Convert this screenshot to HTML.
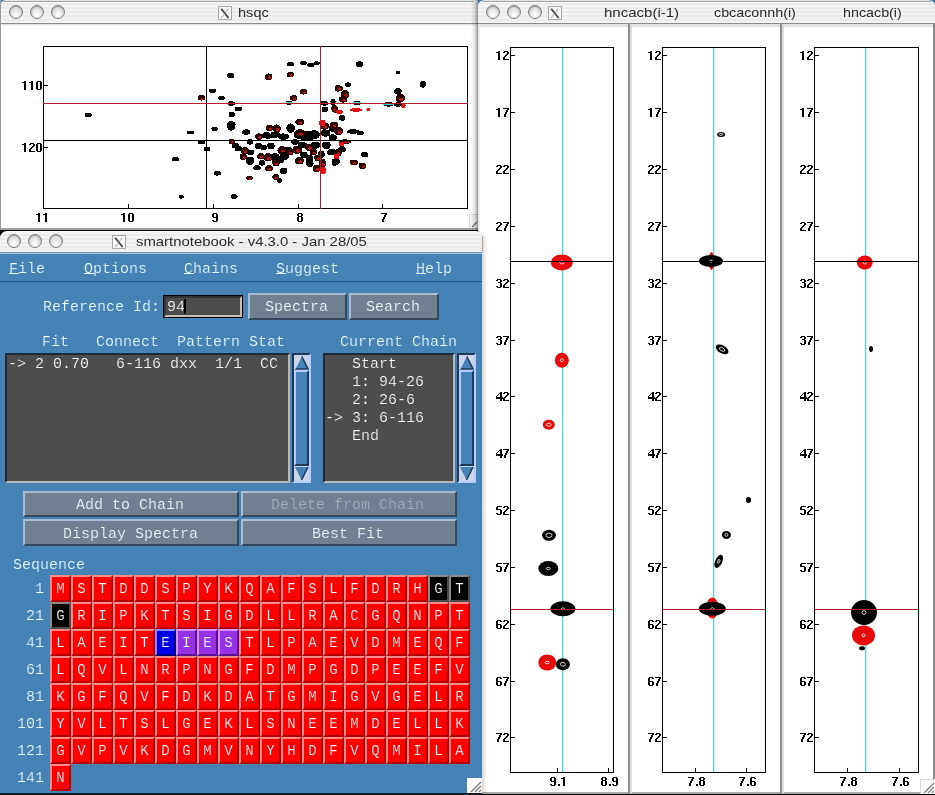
<!DOCTYPE html><html><head><meta charset="utf-8"><style>
html,body{margin:0;padding:0;}
body{width:935px;height:795px;overflow:hidden;position:relative;background:#3f73a8;}
div{position:absolute;box-sizing:border-box;}
.tb{height:24px;background:repeating-linear-gradient(#f3f3f3 0px,#f3f3f3 2px,#eaeaea 2px,#eaeaea 4px);}
.btn{width:14px;height:14px;border-radius:50%;border:1px solid #7c7c7c;
 background:radial-gradient(ellipse at 50% 80%,#ffffff 0%,#f0f0f0 30%,#d4d4d4 75%,#bdbdbd 100%);box-shadow:inset 0 1px 1px rgba(0,0,0,0.25);}
.xi{width:15px;height:14px;border:1px solid #bcbcbc;background:#f2f2f2;
 font-family:'Liberation Serif',serif;font-size:16px;line-height:13px;text-align:center;color:#6a6a6a;}
.tt{will-change:transform;font-family:'Liberation Sans',sans-serif;font-size:13px;line-height:15px;color:#2b2b2b;white-space:pre;transform-origin:0 0;}
.m{will-change:transform;font-family:'Liberation Mono',monospace;font-size:15px;line-height:15px;color:#eefeff;white-space:pre;-webkit-text-stroke:0.22px #4682b4;margin-left:-1px;}
.tkb{background:#708090;border-top:2px solid #a6bcd4;border-left:2px solid #a6bcd4;border-right:2px solid #34495e;border-bottom:2px solid #34495e;}
.cell{width:21px;height:27px;border-top:2px solid #ff8a8a;border-left:2px solid #ff8a8a;border-right:2px solid #b40000;border-bottom:2px solid #b40000;background:#ff0000;
 font-family:'Liberation Mono',monospace;font-size:14px;line-height:24px;text-align:center;color:#fff;-webkit-text-stroke:0.2px #ff0000;will-change:transform;}
</style></head><body>
<div style="left:0;top:20px;width:478px;height:211px;background:#fff;"></div>
<div class="tb" style="left:0px;top:0px;width:478px;border-radius:6px 0 0 0;border-top:1px solid #e4e4e4;"></div>
<div style="left:4px;top:1px;width:470px;height:1px;background:#a4a4a4"></div>
<div style="left:3px;top:2px;width:472px;height:1px;background:#fbfbfb"></div>
<div class="btn" style="left:9px;top:5px;"></div>
<div class="btn" style="left:30px;top:5px;"></div>
<div class="btn" style="left:51px;top:5px;"></div>
<svg style="position:absolute;left:218px;top:6px" width="14" height="14"><rect x="0.5" y="0.5" width="13" height="13" fill="#f6f6f6" stroke="#a8a8a8"/><path d="M3.2 2.8L10.6 12" stroke="#454545" stroke-width="1.8"/><path d="M10.2 2.8L3.2 12" stroke="#8a8a8a" stroke-width="0.8"/></svg>
<div style="left:0;top:23px;width:478px;height:1px;background:#8c8c8c;"></div>
<div style="left:0;top:24px;width:478px;height:1px;background:#e4e4e4;"></div>
<div style="left:0;top:25px;width:478px;height:1px;background:#f2f2f2;"></div>
<div style="left:0;top:0;width:1px;height:231px;background:#9a9a9a;"></div>
<div class="tt" style="left:238px;top:5px;transform:scaleX(1.12)">hsqc</div>
<div style="left:0;top:228px;width:478px;height:2px;background:#a0a0a0;"></div>
<div style="left:0;top:230px;width:478px;height:1px;background:#000;"></div>
<div style="left:469px;top:214px;width:9px;height:14px;background:#f4f4f4;border-left:1px solid #d8d8d8;border-top:1px solid #d8d8d8"></div>
<svg style="position:absolute;left:469px;top:214px" width="9" height="14"><path d="M3 13L8 8" stroke="#707070" stroke-width="1.1"/></svg>
<svg style="position:absolute;left:0;top:0" width="478" height="231" shape-rendering="crispEdges"><g fill="#000"><rect x="43" y="46" width="425" height="1"/><rect x="43" y="208" width="425" height="1"/><rect x="43" y="46" width="1" height="163"/><rect x="467" y="46" width="1" height="163"/><rect x="43" y="85" width="5" height="1"/><rect x="43" y="147" width="5" height="1"/><rect x="43" y="204" width="1" height="4"/><rect x="128" y="204" width="1" height="4"/><rect x="213" y="204" width="1" height="4"/><rect x="298" y="204" width="1" height="4"/><rect x="382" y="204" width="1" height="4"/><path d="M24 81h2v1h-2zM22 82h4v1h-4zM24 83h2v1h-2zM24 84h2v1h-2zM24 85h2v1h-2zM24 86h2v1h-2zM24 87h2v1h-2zM24 88h2v1h-2zM24 89h2v1h-2zM31 81h2v1h-2zM29 82h4v1h-4zM31 83h2v1h-2zM31 84h2v1h-2zM31 85h2v1h-2zM31 86h2v1h-2zM31 87h2v1h-2zM31 88h2v1h-2zM31 89h2v1h-2zM37 81h4v1h-4zM36 82h2v1h-2zM40 82h2v1h-2zM36 83h2v1h-2zM40 83h2v1h-2zM36 84h2v1h-2zM40 84h2v1h-2zM36 85h2v1h-2zM40 85h2v1h-2zM36 86h2v1h-2zM40 86h2v1h-2zM36 87h2v1h-2zM40 87h2v1h-2zM36 88h2v1h-2zM40 88h2v1h-2zM37 89h4v1h-4zM24 143h2v1h-2zM22 144h4v1h-4zM24 145h2v1h-2zM24 146h2v1h-2zM24 147h2v1h-2zM24 148h2v1h-2zM24 149h2v1h-2zM24 150h2v1h-2zM24 151h2v1h-2zM30 143h4v1h-4zM29 144h2v1h-2zM33 144h2v1h-2zM33 145h2v1h-2zM32 146h2v1h-2zM31 147h2v1h-2zM30 148h2v1h-2zM29 149h2v1h-2zM29 150h2v1h-2zM29 151h6v1h-6zM37 143h4v1h-4zM36 144h2v1h-2zM40 144h2v1h-2zM36 145h2v1h-2zM40 145h2v1h-2zM36 146h2v1h-2zM40 146h2v1h-2zM36 147h2v1h-2zM40 147h2v1h-2zM36 148h2v1h-2zM40 148h2v1h-2zM36 149h2v1h-2zM40 149h2v1h-2zM36 150h2v1h-2zM40 150h2v1h-2zM37 151h4v1h-4zM38 213h2v1h-2zM36 214h4v1h-4zM38 215h2v1h-2zM38 216h2v1h-2zM38 217h2v1h-2zM38 218h2v1h-2zM38 219h2v1h-2zM38 220h2v1h-2zM38 221h2v1h-2zM45 213h2v1h-2zM43 214h4v1h-4zM45 215h2v1h-2zM45 216h2v1h-2zM45 217h2v1h-2zM45 218h2v1h-2zM45 219h2v1h-2zM45 220h2v1h-2zM45 221h2v1h-2zM123 213h2v1h-2zM121 214h4v1h-4zM123 215h2v1h-2zM123 216h2v1h-2zM123 217h2v1h-2zM123 218h2v1h-2zM123 219h2v1h-2zM123 220h2v1h-2zM123 221h2v1h-2zM129 213h4v1h-4zM128 214h2v1h-2zM132 214h2v1h-2zM128 215h2v1h-2zM132 215h2v1h-2zM128 216h2v1h-2zM132 216h2v1h-2zM128 217h2v1h-2zM132 217h2v1h-2zM128 218h2v1h-2zM132 218h2v1h-2zM128 219h2v1h-2zM132 219h2v1h-2zM128 220h2v1h-2zM132 220h2v1h-2zM129 221h4v1h-4zM213 213h4v1h-4zM212 214h2v1h-2zM216 214h2v1h-2zM212 215h2v1h-2zM216 215h2v1h-2zM212 216h2v1h-2zM216 216h2v1h-2zM213 217h5v1h-5zM216 218h2v1h-2zM216 219h2v1h-2zM212 220h2v1h-2zM216 220h2v1h-2zM213 221h4v1h-4zM298 213h4v1h-4zM297 214h2v1h-2zM301 214h2v1h-2zM297 215h2v1h-2zM301 215h2v1h-2zM298 216h4v1h-4zM297 217h2v1h-2zM301 217h2v1h-2zM297 218h2v1h-2zM301 218h2v1h-2zM297 219h2v1h-2zM301 219h2v1h-2zM297 220h2v1h-2zM301 220h2v1h-2zM298 221h4v1h-4zM381 213h6v1h-6zM385 214h2v1h-2zM384 215h2v1h-2zM384 216h2v1h-2zM383 217h2v1h-2zM383 218h2v1h-2zM382 219h2v1h-2zM382 220h2v1h-2zM382 221h2v1h-2z"/></g><g><ellipse cx="88.3" cy="114.9" rx="3.8" ry="2.3" fill="#000"/><ellipse cx="190.4" cy="132.6" rx="3.8" ry="1.9000000000000001" fill="#000"/><ellipse cx="175.5" cy="159.1" rx="3.8" ry="2.3" fill="#000"/><ellipse cx="181.3" cy="196.8" rx="2.8" ry="1.9000000000000001" fill="#000"/><ellipse cx="230.6" cy="75.7" rx="3.8" ry="2.8" fill="#000"/><ellipse cx="212.5" cy="90.8" rx="3.8" ry="2.3" fill="#000"/><ellipse cx="201.4" cy="97.8" rx="3.8" ry="2.8" fill="#2c0505"/><ellipse cx="202.16" cy="98.64" rx="1.5959999999999999" ry="1.1199999999999999" fill="#b81414"/><ellipse cx="221.4" cy="98.1" rx="3.8" ry="1.9000000000000001" fill="#000"/><ellipse cx="231.1" cy="103.5" rx="3.8" ry="2.3" fill="#000"/><rect x="227.29999999999998" y="103" width="7.6" height="1" fill="#2ad4d4"/><ellipse cx="238.4" cy="108.9" rx="3.8" ry="2.3" fill="#000"/><ellipse cx="231.8" cy="114.7" rx="3.3" ry="2.8" fill="#000"/><ellipse cx="231.3" cy="124.5" rx="4.3" ry="3.1999999999999997" fill="#000"/><ellipse cx="290.5" cy="64.1" rx="3.8" ry="2.3" fill="#000"/><ellipse cx="303.5" cy="62.9" rx="3.3" ry="2.3" fill="#000"/><ellipse cx="310.8" cy="65.1" rx="3.8" ry="2.3" fill="#000"/><ellipse cx="316.8" cy="63.3" rx="3.3" ry="1.9000000000000001" fill="#000"/><ellipse cx="290.4" cy="74.7" rx="3.8" ry="2.8" fill="#2c0505"/><ellipse cx="291.15999999999997" cy="75.54" rx="1.5959999999999999" ry="1.1199999999999999" fill="#b81414"/><ellipse cx="268.6" cy="76.7" rx="3.8" ry="3.3" fill="#2c0505"/><ellipse cx="269.36" cy="77.69" rx="1.5959999999999999" ry="1.32" fill="#b81414"/><ellipse cx="303.5" cy="91.8" rx="3.8" ry="2.8" fill="#2c0505"/><ellipse cx="304.26" cy="92.64" rx="1.5959999999999999" ry="1.1199999999999999" fill="#b81414"/><ellipse cx="293.7" cy="98" rx="3.8" ry="2.8" fill="#2c0505"/><ellipse cx="294.46" cy="98.84" rx="1.5959999999999999" ry="1.1199999999999999" fill="#b81414"/><ellipse cx="289" cy="102.8" rx="3.3" ry="2.3" fill="#000"/><rect x="285.7" y="102" width="6.6" height="1" fill="#2ad4d4"/><ellipse cx="324.4" cy="103.3" rx="4.3" ry="2.3" fill="#000"/><rect x="320.09999999999997" y="103" width="8.6" height="1" fill="#2ad4d4"/><ellipse cx="333" cy="102.8" rx="3.3" ry="2.3" fill="#000"/><rect x="329.7" y="102" width="6.6" height="1" fill="#2ad4d4"/><ellipse cx="324.9" cy="109.4" rx="3.3" ry="2.8" fill="#000"/><ellipse cx="335" cy="109.4" rx="3.3" ry="3.3" fill="#2c0505"/><ellipse cx="335.66" cy="110.39" rx="1.386" ry="1.32" fill="#b81414"/><ellipse cx="338" cy="88.3" rx="3.3" ry="3.3" fill="#2c0505"/><ellipse cx="338.66" cy="89.28999999999999" rx="1.386" ry="1.32" fill="#b81414"/><ellipse cx="299.7" cy="122" rx="4.3" ry="3.1999999999999997" fill="#2c0505"/><ellipse cx="300.56" cy="122.96" rx="1.8059999999999998" ry="1.28" fill="#b81414"/><ellipse cx="359.4" cy="64.1" rx="3.8" ry="2.8" fill="#000"/><ellipse cx="397.9" cy="72.4" rx="2.3" ry="1.9000000000000001" fill="#000"/><ellipse cx="348.1" cy="84.7" rx="3.3" ry="2.3" fill="#000"/><ellipse cx="339" cy="88.3" rx="3.8" ry="2.8" fill="#2c0505"/><ellipse cx="339.76" cy="89.14" rx="1.5959999999999999" ry="1.1199999999999999" fill="#b81414"/><ellipse cx="345.1" cy="94.3" rx="4.3" ry="4.3" fill="#2c0505"/><ellipse cx="345.96000000000004" cy="95.59" rx="1.8059999999999998" ry="1.72" fill="#b81414"/><ellipse cx="343.1" cy="99.3" rx="4.3" ry="3.3" fill="#2c0505"/><ellipse cx="343.96000000000004" cy="100.28999999999999" rx="1.8059999999999998" ry="1.32" fill="#b81414"/><ellipse cx="333" cy="101.3" rx="2.3" ry="2.3" fill="#000"/><ellipse cx="357.2" cy="102.8" rx="3.8" ry="2.3" fill="#000"/><rect x="353.4" y="102" width="7.6" height="1" fill="#2ad4d4"/><ellipse cx="356.2" cy="109.9" rx="6.3" ry="1.9000000000000001" fill="#e81010"/><ellipse cx="368.2" cy="109.6" rx="1.8" ry="1.5" fill="#e81010"/><ellipse cx="334" cy="108.4" rx="2.8" ry="3.3" fill="#2c0505"/><ellipse cx="334.56" cy="109.39" rx="1.176" ry="1.32" fill="#b81414"/><ellipse cx="339.6" cy="111.9" rx="3.3" ry="2.3" fill="#e81010"/><ellipse cx="342.1" cy="117.9" rx="3.3" ry="2.8" fill="#000"/><ellipse cx="334" cy="124.5" rx="3.8" ry="2.6999999999999997" fill="#2c0505"/><ellipse cx="334.76" cy="125.31" rx="1.5959999999999999" ry="1.0799999999999998" fill="#b81414"/><ellipse cx="397.9" cy="91.3" rx="3.8" ry="3.3" fill="#000"/><ellipse cx="400.4" cy="98.3" rx="4.8" ry="4.3" fill="#2c0505"/><ellipse cx="401.35999999999996" cy="99.59" rx="2.016" ry="1.72" fill="#b81414"/><ellipse cx="388.4" cy="104.3" rx="5.3" ry="2.3" fill="#000"/><rect x="383.09999999999997" y="104" width="10.6" height="1" fill="#2ad4d4"/><ellipse cx="398" cy="104.5" rx="4.3" ry="2.3" fill="#000"/><ellipse cx="403.4" cy="105.9" rx="2.3" ry="2.3" fill="#e81010"/><ellipse cx="422.8" cy="84.4" rx="3.3" ry="3.3" fill="#000"/><ellipse cx="214.7" cy="128.9" rx="3.3" ry="2.3" fill="#000"/><ellipse cx="231.1" cy="126" rx="4.3" ry="4.7" fill="#000"/><ellipse cx="246.2" cy="132.1" rx="4.3" ry="2.6999999999999997" fill="#000"/><ellipse cx="201.6" cy="142.3" rx="3.8" ry="1.9000000000000001" fill="#000"/><ellipse cx="207" cy="149.2" rx="3.3" ry="2.3" fill="#000"/><ellipse cx="231.8" cy="141.6" rx="3.3" ry="2.6999999999999997" fill="#2c0505"/><ellipse cx="232.46" cy="142.41" rx="1.386" ry="1.0799999999999998" fill="#b81414"/><ellipse cx="235.3" cy="145.7" rx="3.8" ry="2.6999999999999997" fill="#000"/><ellipse cx="238.4" cy="148.7" rx="3.8" ry="2.6999999999999997" fill="#000"/><ellipse cx="244.9" cy="150.7" rx="3.8" ry="3.6999999999999997" fill="#2c0505"/><ellipse cx="245.66" cy="151.81" rx="1.5959999999999999" ry="1.48" fill="#b81414"/><ellipse cx="250.4" cy="152.2" rx="3.8" ry="2.6999999999999997" fill="#000"/><ellipse cx="243.4" cy="156.7" rx="3.8" ry="3.1999999999999997" fill="#2c0505"/><ellipse cx="244.16" cy="157.66" rx="1.5959999999999999" ry="1.28" fill="#b81414"/><ellipse cx="250.2" cy="160.7" rx="4.3" ry="4.2" fill="#000"/><ellipse cx="257" cy="167.8" rx="3.8" ry="2.6999999999999997" fill="#000"/><ellipse cx="217.4" cy="173.3" rx="3.8" ry="2.3" fill="#000"/><ellipse cx="249.4" cy="178.2" rx="3.3" ry="2.3" fill="#2c0505"/><ellipse cx="250.06" cy="178.89" rx="1.386" ry="0.9199999999999999" fill="#b81414"/><ellipse cx="234.3" cy="196.5" rx="3.3" ry="2.3" fill="#000"/><ellipse cx="258.5" cy="137.1" rx="3.3" ry="2.6999999999999997" fill="#2c0505"/><ellipse cx="259.16" cy="137.91" rx="1.386" ry="1.0799999999999998" fill="#b81414"/><ellipse cx="258" cy="145.7" rx="3.3" ry="2.6999999999999997" fill="#2c0505"/><ellipse cx="258.66" cy="146.51" rx="1.386" ry="1.0799999999999998" fill="#b81414"/><ellipse cx="269.6" cy="128.1" rx="3.8" ry="3.1999999999999997" fill="#2c0505"/><ellipse cx="270.36" cy="129.06" rx="1.5959999999999999" ry="1.28" fill="#b81414"/><ellipse cx="276.6" cy="128.6" rx="4.3" ry="4.2" fill="#2c0505"/><ellipse cx="277.46000000000004" cy="129.85999999999999" rx="1.8059999999999998" ry="1.6800000000000002" fill="#b81414"/><ellipse cx="290.7" cy="128.1" rx="4.3" ry="4.7" fill="#000"/><ellipse cx="259" cy="136.6" rx="3.8" ry="3.1999999999999997" fill="#2c0505"/><ellipse cx="259.76" cy="137.56" rx="1.5959999999999999" ry="1.28" fill="#b81414"/><ellipse cx="268.1" cy="136.1" rx="4.3" ry="2.6999999999999997" fill="#000"/><ellipse cx="275.1" cy="134.6" rx="4.8" ry="2.6999999999999997" fill="#000"/><ellipse cx="283.2" cy="136.6" rx="5.8" ry="3.1999999999999997" fill="#000"/><ellipse cx="307" cy="135.5" rx="12.8" ry="4.7" fill="#000"/><ellipse cx="325.4" cy="133.1" rx="4.8" ry="3.6999999999999997" fill="#000"/><ellipse cx="324.4" cy="126.1" rx="4.8" ry="3.6999999999999997" fill="#2c0505"/><ellipse cx="325.35999999999996" cy="127.21" rx="2.016" ry="1.48" fill="#b81414"/><ellipse cx="322.4" cy="123" rx="3.3" ry="3.1999999999999997" fill="#e81010"/><ellipse cx="332.5" cy="128.1" rx="3.8" ry="3.6999999999999997" fill="#000"/><ellipse cx="333" cy="137.6" rx="3.8" ry="3.1999999999999997" fill="#000"/><ellipse cx="259" cy="146.2" rx="3.8" ry="3.1999999999999997" fill="#000"/><ellipse cx="263.6" cy="147.7" rx="3.3" ry="2.6999999999999997" fill="#000"/><ellipse cx="261" cy="156.2" rx="3.8" ry="3.1999999999999997" fill="#2c0505"/><ellipse cx="261.76" cy="157.16" rx="1.5959999999999999" ry="1.28" fill="#b81414"/><ellipse cx="268.1" cy="157.3" rx="4.8" ry="4.2" fill="#2c0505"/><ellipse cx="269.06" cy="158.56" rx="2.016" ry="1.6800000000000002" fill="#b81414"/><ellipse cx="275.1" cy="157.3" rx="4.8" ry="4.2" fill="#000"/><ellipse cx="282.2" cy="150.2" rx="4.8" ry="4.2" fill="#2c0505"/><ellipse cx="283.15999999999997" cy="151.45999999999998" rx="2.016" ry="1.6800000000000002" fill="#b81414"/><ellipse cx="284.2" cy="156.2" rx="4.8" ry="4.2" fill="#000"/><ellipse cx="280.2" cy="160.8" rx="3.8" ry="2.6999999999999997" fill="#000"/><ellipse cx="288.2" cy="149.7" rx="3.8" ry="2.6999999999999997" fill="#000"/><ellipse cx="297.3" cy="149.7" rx="4.8" ry="4.2" fill="#2c0505"/><ellipse cx="298.26" cy="150.95999999999998" rx="2.016" ry="1.6800000000000002" fill="#b81414"/><ellipse cx="302.3" cy="145.2" rx="4.8" ry="3.1999999999999997" fill="#000"/><ellipse cx="309.3" cy="147.2" rx="4.8" ry="3.6999999999999997" fill="#2c0505"/><ellipse cx="310.26" cy="148.31" rx="2.016" ry="1.48" fill="#b81414"/><ellipse cx="315.4" cy="145.2" rx="4.8" ry="3.6999999999999997" fill="#000"/><ellipse cx="313.4" cy="152.2" rx="3.8" ry="3.1999999999999997" fill="#2c0505"/><ellipse cx="314.15999999999997" cy="153.16" rx="1.5959999999999999" ry="1.28" fill="#b81414"/><ellipse cx="299.3" cy="160.8" rx="4.8" ry="3.6999999999999997" fill="#2c0505"/><ellipse cx="300.26" cy="161.91000000000003" rx="2.016" ry="1.48" fill="#b81414"/><ellipse cx="309.3" cy="158.3" rx="3.8" ry="3.6999999999999997" fill="#000"/><ellipse cx="309.8" cy="163.3" rx="3.8" ry="3.6999999999999997" fill="#000"/><ellipse cx="316.9" cy="168.3" rx="4.3" ry="3.6999999999999997" fill="#2c0505"/><ellipse cx="317.76" cy="169.41000000000003" rx="1.8059999999999998" ry="1.48" fill="#b81414"/><ellipse cx="321.4" cy="154.2" rx="3.3" ry="3.6999999999999997" fill="#000"/><ellipse cx="322.4" cy="163.3" rx="3.8" ry="4.7" fill="#2c0505"/><ellipse cx="323.15999999999997" cy="164.71" rx="1.5959999999999999" ry="1.8800000000000001" fill="#b81414"/><ellipse cx="322.9" cy="170.3" rx="3.3" ry="3.6999999999999997" fill="#e81010"/><ellipse cx="326.4" cy="145.2" rx="4.3" ry="3.6999999999999997" fill="#000"/><ellipse cx="331.5" cy="152.2" rx="4.3" ry="3.1999999999999997" fill="#000"/><ellipse cx="269.1" cy="168.3" rx="3.8" ry="3.1999999999999997" fill="#2c0505"/><ellipse cx="269.86" cy="169.26000000000002" rx="1.5959999999999999" ry="1.28" fill="#b81414"/><ellipse cx="283.7" cy="170.8" rx="3.8" ry="3.1999999999999997" fill="#000"/><ellipse cx="275.6" cy="176.9" rx="3.3" ry="2.8" fill="#2c0505"/><ellipse cx="276.26000000000005" cy="177.74" rx="1.386" ry="1.1199999999999999" fill="#b81414"/><ellipse cx="279.6" cy="180.4" rx="2.8" ry="2.3" fill="#000"/><ellipse cx="334.5" cy="162.3" rx="2.8" ry="3.6999999999999997" fill="#000"/><ellipse cx="334.5" cy="125.6" rx="3.8" ry="3.1999999999999997" fill="#2c0505"/><ellipse cx="335.26" cy="126.55999999999999" rx="1.5959999999999999" ry="1.28" fill="#b81414"/><ellipse cx="338.6" cy="131.1" rx="4.8" ry="4.2" fill="#2c0505"/><ellipse cx="339.56" cy="132.35999999999999" rx="2.016" ry="1.6800000000000002" fill="#b81414"/><ellipse cx="353.1" cy="131.6" rx="6.3" ry="2.3" fill="#000"/><ellipse cx="360.2" cy="133.1" rx="3.8" ry="1.9000000000000001" fill="#000"/><ellipse cx="332" cy="137.6" rx="3.3" ry="3.1999999999999997" fill="#000"/><ellipse cx="345.1" cy="141.7" rx="6.3" ry="2.3" fill="#2c0505"/><ellipse cx="346.36" cy="142.39" rx="2.646" ry="0.9199999999999999" fill="#b81414"/><ellipse cx="341.6" cy="144.2" rx="2.8" ry="2.6999999999999997" fill="#e81010"/><ellipse cx="342.1" cy="149.2" rx="3.8" ry="3.1999999999999997" fill="#000"/><ellipse cx="332" cy="151.7" rx="3.8" ry="3.1999999999999997" fill="#000"/><ellipse cx="338" cy="152.7" rx="3.8" ry="3.6999999999999997" fill="#2c0505"/><ellipse cx="338.76" cy="153.81" rx="1.5959999999999999" ry="1.48" fill="#b81414"/><ellipse cx="336.5" cy="157.3" rx="2.8" ry="3.6999999999999997" fill="#e81010"/><ellipse cx="336" cy="161.8" rx="3.8" ry="3.1999999999999997" fill="#000"/><ellipse cx="364.7" cy="154.7" rx="3.8" ry="2.8" fill="#000"/><ellipse cx="353.9" cy="162.3" rx="4.3" ry="2.8" fill="#2c0505"/><ellipse cx="354.76" cy="163.14000000000001" rx="1.8059999999999998" ry="1.1199999999999999" fill="#b81414"/><ellipse cx="362.4" cy="165.8" rx="3.8" ry="3.3" fill="#2c0505"/><ellipse cx="363.15999999999997" cy="166.79000000000002" rx="1.5959999999999999" ry="1.32" fill="#b81414"/><ellipse cx="266.4" cy="135.4" rx="4.3" ry="3.1999999999999997" fill="#000"/><ellipse cx="274.6" cy="134.7" rx="4.3" ry="3.1999999999999997" fill="#000"/><ellipse cx="282.9" cy="137" rx="4.3" ry="2.6999999999999997" fill="#000"/><ellipse cx="300" cy="133" rx="5.8" ry="3.6999999999999997" fill="#2c0505"/><ellipse cx="301.16" cy="134.11" rx="2.436" ry="1.48" fill="#b81414"/><ellipse cx="314" cy="134" rx="5.8" ry="3.6999999999999997" fill="#000"/><ellipse cx="324.8" cy="132.5" rx="3.8" ry="3.1999999999999997" fill="#000"/><ellipse cx="333.8" cy="125" rx="3.8" ry="3.1999999999999997" fill="#2c0505"/><ellipse cx="334.56" cy="125.96" rx="1.5959999999999999" ry="1.28" fill="#b81414"/><ellipse cx="290" cy="152" rx="3.8" ry="3.1999999999999997" fill="#2c0505"/><ellipse cx="290.76" cy="152.96" rx="1.5959999999999999" ry="1.28" fill="#b81414"/><ellipse cx="304" cy="155" rx="3.8" ry="3.1999999999999997" fill="#000"/><ellipse cx="318" cy="158" rx="3.8" ry="3.1999999999999997" fill="#2c0505"/><ellipse cx="318.76" cy="158.96" rx="1.5959999999999999" ry="1.28" fill="#b81414"/><ellipse cx="271" cy="146" rx="3.8" ry="3.1999999999999997" fill="#000"/><ellipse cx="295" cy="142" rx="3.8" ry="2.6999999999999997" fill="#000"/><ellipse cx="250" cy="142" rx="3.3" ry="2.6999999999999997" fill="#000"/><ellipse cx="276" cy="163" rx="3.8" ry="3.1999999999999997" fill="#2c0505"/><ellipse cx="276.76" cy="163.96" rx="1.5959999999999999" ry="1.28" fill="#b81414"/><ellipse cx="262" cy="163" rx="3.3" ry="2.6999999999999997" fill="#000"/></g><rect x="206" y="46" width="1" height="163" fill="#000"/><rect x="43" y="140" width="425" height="1" fill="#000"/><rect x="320" y="46" width="1" height="163" fill="#b0202a"/><rect x="43" y="103" width="425" height="1" fill="#b0202a"/></svg>
<div style="left:471px;top:0;width:7px;height:231px;background:linear-gradient(90deg,rgba(0,0,0,0),rgba(0,0,0,0.1) 50%,rgba(0,0,0,0.38));"></div>
<div style="left:478px;top:20px;width:457px;height:775px;background:#fff;"></div>
<div class="tb" style="left:478px;top:0px;width:457px;border-radius:6px 6px 0 0;border-top:1px solid #e4e4e4;"></div>
<div style="left:482px;top:1px;width:449px;height:1px;background:#a4a4a4"></div>
<div style="left:481px;top:2px;width:451px;height:1px;background:#fbfbfb"></div>
<div class="btn" style="left:486px;top:5px;"></div>
<div class="btn" style="left:507px;top:5px;"></div>
<div class="btn" style="left:528px;top:5px;"></div>
<svg style="position:absolute;left:548px;top:6px" width="14" height="14"><rect x="0.5" y="0.5" width="13" height="13" fill="#f6f6f6" stroke="#a8a8a8"/><path d="M3.2 2.8L10.6 12" stroke="#454545" stroke-width="1.8"/><path d="M10.2 2.8L3.2 12" stroke="#8a8a8a" stroke-width="0.8"/></svg>
<div style="left:478px;top:23px;width:457px;height:1px;background:#8c8c8c;"></div>
<div style="left:478px;top:24px;width:457px;height:3px;background:#e2e2e2;"></div>
<div class="tt" style="left:604px;top:5px;transform:scaleX(1.155)">hncacb(i-1)</div>
<div class="tt" style="left:714px;top:5px;transform:scaleX(1.1)">cbcaconnh(i)</div>
<div class="tt" style="left:843px;top:5px;transform:scaleX(1.1)">hncacb(i)</div>
<div style="left:478px;top:24px;width:1px;height:771px;background:#e2e2e2;"></div>
<div style="left:479px;top:24px;width:1px;height:771px;background:#f2f2f2;"></div>
<div style="left:933px;top:24px;width:2px;height:771px;background:#8a8a8a;"></div>
<div style="left:478px;top:792px;width:457px;height:2px;background:#a8a8a8;"></div>
<div style="left:478px;top:794px;width:457px;height:1px;background:#000;"></div>
<div style="left:628px;top:24px;width:2px;height:769px;background:#8c8c8c;"></div>
<div style="left:630px;top:24px;width:2px;height:769px;background:#dedede;"></div>
<div style="left:780px;top:24px;width:2px;height:769px;background:#8c8c8c;"></div>
<div style="left:782px;top:24px;width:2px;height:769px;background:#dedede;"></div>
<div style="left:920px;top:779px;width:15px;height:15px;background:#fbfbfb;border-top:1px solid #d8d8d8;border-left:1px solid #d8d8d8;"></div>
<svg style="position:absolute;left:920px;top:779px" width="15" height="15"><path d="M4 14L14 4M8 14L14 8M12 14L14 12" stroke="#808080" stroke-width="1.2"/></svg>
<svg style="position:absolute;left:0;top:0" width="935" height="795" shape-rendering="crispEdges"><g fill="#000"><rect x="510" y="47" width="104" height="1"/><rect x="510" y="772" width="104" height="1"/><rect x="510" y="47" width="1" height="726"/><rect x="613" y="47" width="1" height="726"/><rect x="510" y="55" width="5" height="1"/><rect x="510" y="112" width="5" height="1"/><rect x="510" y="169" width="5" height="1"/><rect x="510" y="226" width="5" height="1"/><rect x="510" y="283" width="5" height="1"/><rect x="510" y="340" width="5" height="1"/><rect x="510" y="396" width="5" height="1"/><rect x="510" y="453" width="5" height="1"/><rect x="510" y="510" width="5" height="1"/><rect x="510" y="567" width="5" height="1"/><rect x="510" y="624" width="5" height="1"/><rect x="510" y="681" width="5" height="1"/><rect x="510" y="737" width="5" height="1"/><rect x="557" y="768" width="1" height="4"/><rect x="608" y="768" width="1" height="4"/><rect x="562" y="48" width="1" height="724" fill="#5ccfd4"/><rect x="563" y="48" width="1" height="724" fill="#b4fbfb"/><rect x="662" y="47" width="104" height="1"/><rect x="662" y="772" width="104" height="1"/><rect x="662" y="47" width="1" height="726"/><rect x="765" y="47" width="1" height="726"/><rect x="662" y="55" width="5" height="1"/><rect x="662" y="112" width="5" height="1"/><rect x="662" y="169" width="5" height="1"/><rect x="662" y="226" width="5" height="1"/><rect x="662" y="283" width="5" height="1"/><rect x="662" y="340" width="5" height="1"/><rect x="662" y="396" width="5" height="1"/><rect x="662" y="453" width="5" height="1"/><rect x="662" y="510" width="5" height="1"/><rect x="662" y="567" width="5" height="1"/><rect x="662" y="624" width="5" height="1"/><rect x="662" y="681" width="5" height="1"/><rect x="662" y="737" width="5" height="1"/><rect x="695" y="768" width="1" height="4"/><rect x="746" y="768" width="1" height="4"/><rect x="713" y="48" width="1" height="724" fill="#5ccfd4"/><rect x="714" y="48" width="1" height="724" fill="#b4fbfb"/><rect x="814" y="47" width="105" height="1"/><rect x="814" y="772" width="105" height="1"/><rect x="814" y="47" width="1" height="726"/><rect x="918" y="47" width="1" height="726"/><rect x="814" y="55" width="5" height="1"/><rect x="814" y="112" width="5" height="1"/><rect x="814" y="169" width="5" height="1"/><rect x="814" y="226" width="5" height="1"/><rect x="814" y="283" width="5" height="1"/><rect x="814" y="340" width="5" height="1"/><rect x="814" y="396" width="5" height="1"/><rect x="814" y="453" width="5" height="1"/><rect x="814" y="510" width="5" height="1"/><rect x="814" y="567" width="5" height="1"/><rect x="814" y="624" width="5" height="1"/><rect x="814" y="681" width="5" height="1"/><rect x="814" y="737" width="5" height="1"/><rect x="847" y="768" width="1" height="4"/><rect x="899" y="768" width="1" height="4"/><rect x="865" y="48" width="1" height="724" fill="#5ccfd4"/><rect x="866" y="48" width="1" height="724" fill="#b4fbfb"/><path d="M498 51h2v1h-2zM496 52h4v1h-4zM498 53h2v1h-2zM498 54h2v1h-2zM498 55h2v1h-2zM498 56h2v1h-2zM498 57h2v1h-2zM498 58h2v1h-2zM498 59h2v1h-2zM504 51h4v1h-4zM503 52h2v1h-2zM507 52h2v1h-2zM507 53h2v1h-2zM506 54h2v1h-2zM505 55h2v1h-2zM504 56h2v1h-2zM503 57h2v1h-2zM503 58h2v1h-2zM503 59h6v1h-6zM498 108h2v1h-2zM496 109h4v1h-4zM498 110h2v1h-2zM498 111h2v1h-2zM498 112h2v1h-2zM498 113h2v1h-2zM498 114h2v1h-2zM498 115h2v1h-2zM498 116h2v1h-2zM503 108h6v1h-6zM507 109h2v1h-2zM506 110h2v1h-2zM506 111h2v1h-2zM505 112h2v1h-2zM505 113h2v1h-2zM504 114h2v1h-2zM504 115h2v1h-2zM504 116h2v1h-2zM497 165h4v1h-4zM496 166h2v1h-2zM500 166h2v1h-2zM500 167h2v1h-2zM499 168h2v1h-2zM498 169h2v1h-2zM497 170h2v1h-2zM496 171h2v1h-2zM496 172h2v1h-2zM496 173h6v1h-6zM504 165h4v1h-4zM503 166h2v1h-2zM507 166h2v1h-2zM507 167h2v1h-2zM506 168h2v1h-2zM505 169h2v1h-2zM504 170h2v1h-2zM503 171h2v1h-2zM503 172h2v1h-2zM503 173h6v1h-6zM497 222h4v1h-4zM496 223h2v1h-2zM500 223h2v1h-2zM500 224h2v1h-2zM499 225h2v1h-2zM498 226h2v1h-2zM497 227h2v1h-2zM496 228h2v1h-2zM496 229h2v1h-2zM496 230h6v1h-6zM503 222h6v1h-6zM507 223h2v1h-2zM506 224h2v1h-2zM506 225h2v1h-2zM505 226h2v1h-2zM505 227h2v1h-2zM504 228h2v1h-2zM504 229h2v1h-2zM504 230h2v1h-2zM497 279h4v1h-4zM496 280h2v1h-2zM500 280h2v1h-2zM500 281h2v1h-2zM498 282h3v1h-3zM500 283h2v1h-2zM500 284h2v1h-2zM500 285h2v1h-2zM496 286h2v1h-2zM500 286h2v1h-2zM497 287h4v1h-4zM504 279h4v1h-4zM503 280h2v1h-2zM507 280h2v1h-2zM507 281h2v1h-2zM506 282h2v1h-2zM505 283h2v1h-2zM504 284h2v1h-2zM503 285h2v1h-2zM503 286h2v1h-2zM503 287h6v1h-6zM497 336h4v1h-4zM496 337h2v1h-2zM500 337h2v1h-2zM500 338h2v1h-2zM498 339h3v1h-3zM500 340h2v1h-2zM500 341h2v1h-2zM500 342h2v1h-2zM496 343h2v1h-2zM500 343h2v1h-2zM497 344h4v1h-4zM503 336h6v1h-6zM507 337h2v1h-2zM506 338h2v1h-2zM506 339h2v1h-2zM505 340h2v1h-2zM505 341h2v1h-2zM504 342h2v1h-2zM504 343h2v1h-2zM504 344h2v1h-2zM500 392h2v1h-2zM499 393h3v1h-3zM498 394h1v1h-1zM500 394h2v1h-2zM497 395h1v1h-1zM500 395h2v1h-2zM496 396h1v1h-1zM500 396h2v1h-2zM496 397h7v1h-7zM496 398h7v1h-7zM500 399h2v1h-2zM500 400h2v1h-2zM504 392h4v1h-4zM503 393h2v1h-2zM507 393h2v1h-2zM507 394h2v1h-2zM506 395h2v1h-2zM505 396h2v1h-2zM504 397h2v1h-2zM503 398h2v1h-2zM503 399h2v1h-2zM503 400h6v1h-6zM500 449h2v1h-2zM499 450h3v1h-3zM498 451h1v1h-1zM500 451h2v1h-2zM497 452h1v1h-1zM500 452h2v1h-2zM496 453h1v1h-1zM500 453h2v1h-2zM496 454h7v1h-7zM496 455h7v1h-7zM500 456h2v1h-2zM500 457h2v1h-2zM503 449h6v1h-6zM507 450h2v1h-2zM506 451h2v1h-2zM506 452h2v1h-2zM505 453h2v1h-2zM505 454h2v1h-2zM504 455h2v1h-2zM504 456h2v1h-2zM504 457h2v1h-2zM497 506h5v1h-5zM496 507h2v1h-2zM496 508h2v1h-2zM496 509h5v1h-5zM500 510h2v1h-2zM500 511h2v1h-2zM500 512h2v1h-2zM496 513h2v1h-2zM500 513h2v1h-2zM497 514h4v1h-4zM504 506h4v1h-4zM503 507h2v1h-2zM507 507h2v1h-2zM507 508h2v1h-2zM506 509h2v1h-2zM505 510h2v1h-2zM504 511h2v1h-2zM503 512h2v1h-2zM503 513h2v1h-2zM503 514h6v1h-6zM497 563h5v1h-5zM496 564h2v1h-2zM496 565h2v1h-2zM496 566h5v1h-5zM500 567h2v1h-2zM500 568h2v1h-2zM500 569h2v1h-2zM496 570h2v1h-2zM500 570h2v1h-2zM497 571h4v1h-4zM503 563h6v1h-6zM507 564h2v1h-2zM506 565h2v1h-2zM506 566h2v1h-2zM505 567h2v1h-2zM505 568h2v1h-2zM504 569h2v1h-2zM504 570h2v1h-2zM504 571h2v1h-2zM497 620h4v1h-4zM496 621h2v1h-2zM500 621h2v1h-2zM496 622h2v1h-2zM496 623h2v1h-2zM496 624h5v1h-5zM496 625h2v1h-2zM500 625h2v1h-2zM496 626h2v1h-2zM500 626h2v1h-2zM496 627h2v1h-2zM500 627h2v1h-2zM497 628h4v1h-4zM504 620h4v1h-4zM503 621h2v1h-2zM507 621h2v1h-2zM507 622h2v1h-2zM506 623h2v1h-2zM505 624h2v1h-2zM504 625h2v1h-2zM503 626h2v1h-2zM503 627h2v1h-2zM503 628h6v1h-6zM497 677h4v1h-4zM496 678h2v1h-2zM500 678h2v1h-2zM496 679h2v1h-2zM496 680h2v1h-2zM496 681h5v1h-5zM496 682h2v1h-2zM500 682h2v1h-2zM496 683h2v1h-2zM500 683h2v1h-2zM496 684h2v1h-2zM500 684h2v1h-2zM497 685h4v1h-4zM503 677h6v1h-6zM507 678h2v1h-2zM506 679h2v1h-2zM506 680h2v1h-2zM505 681h2v1h-2zM505 682h2v1h-2zM504 683h2v1h-2zM504 684h2v1h-2zM504 685h2v1h-2zM496 733h6v1h-6zM500 734h2v1h-2zM499 735h2v1h-2zM499 736h2v1h-2zM498 737h2v1h-2zM498 738h2v1h-2zM497 739h2v1h-2zM497 740h2v1h-2zM497 741h2v1h-2zM504 733h4v1h-4zM503 734h2v1h-2zM507 734h2v1h-2zM507 735h2v1h-2zM506 736h2v1h-2zM505 737h2v1h-2zM504 738h2v1h-2zM503 739h2v1h-2zM503 740h2v1h-2zM503 741h6v1h-6zM551 777h4v1h-4zM550 778h2v1h-2zM554 778h2v1h-2zM550 779h2v1h-2zM554 779h2v1h-2zM550 780h2v1h-2zM554 780h2v1h-2zM551 781h5v1h-5zM554 782h2v1h-2zM554 783h2v1h-2zM550 784h2v1h-2zM554 784h2v1h-2zM551 785h4v1h-4zM558 784h2v1h-2zM558 785h2v1h-2zM563 777h2v1h-2zM561 778h4v1h-4zM563 779h2v1h-2zM563 780h2v1h-2zM563 781h2v1h-2zM563 782h2v1h-2zM563 783h2v1h-2zM563 784h2v1h-2zM563 785h2v1h-2zM602 777h4v1h-4zM601 778h2v1h-2zM605 778h2v1h-2zM601 779h2v1h-2zM605 779h2v1h-2zM602 780h4v1h-4zM601 781h2v1h-2zM605 781h2v1h-2zM601 782h2v1h-2zM605 782h2v1h-2zM601 783h2v1h-2zM605 783h2v1h-2zM601 784h2v1h-2zM605 784h2v1h-2zM602 785h4v1h-4zM609 784h2v1h-2zM609 785h2v1h-2zM613 777h4v1h-4zM612 778h2v1h-2zM616 778h2v1h-2zM612 779h2v1h-2zM616 779h2v1h-2zM612 780h2v1h-2zM616 780h2v1h-2zM613 781h5v1h-5zM616 782h2v1h-2zM616 783h2v1h-2zM612 784h2v1h-2zM616 784h2v1h-2zM613 785h4v1h-4zM650 51h2v1h-2zM648 52h4v1h-4zM650 53h2v1h-2zM650 54h2v1h-2zM650 55h2v1h-2zM650 56h2v1h-2zM650 57h2v1h-2zM650 58h2v1h-2zM650 59h2v1h-2zM656 51h4v1h-4zM655 52h2v1h-2zM659 52h2v1h-2zM659 53h2v1h-2zM658 54h2v1h-2zM657 55h2v1h-2zM656 56h2v1h-2zM655 57h2v1h-2zM655 58h2v1h-2zM655 59h6v1h-6zM650 108h2v1h-2zM648 109h4v1h-4zM650 110h2v1h-2zM650 111h2v1h-2zM650 112h2v1h-2zM650 113h2v1h-2zM650 114h2v1h-2zM650 115h2v1h-2zM650 116h2v1h-2zM655 108h6v1h-6zM659 109h2v1h-2zM658 110h2v1h-2zM658 111h2v1h-2zM657 112h2v1h-2zM657 113h2v1h-2zM656 114h2v1h-2zM656 115h2v1h-2zM656 116h2v1h-2zM649 165h4v1h-4zM648 166h2v1h-2zM652 166h2v1h-2zM652 167h2v1h-2zM651 168h2v1h-2zM650 169h2v1h-2zM649 170h2v1h-2zM648 171h2v1h-2zM648 172h2v1h-2zM648 173h6v1h-6zM656 165h4v1h-4zM655 166h2v1h-2zM659 166h2v1h-2zM659 167h2v1h-2zM658 168h2v1h-2zM657 169h2v1h-2zM656 170h2v1h-2zM655 171h2v1h-2zM655 172h2v1h-2zM655 173h6v1h-6zM649 222h4v1h-4zM648 223h2v1h-2zM652 223h2v1h-2zM652 224h2v1h-2zM651 225h2v1h-2zM650 226h2v1h-2zM649 227h2v1h-2zM648 228h2v1h-2zM648 229h2v1h-2zM648 230h6v1h-6zM655 222h6v1h-6zM659 223h2v1h-2zM658 224h2v1h-2zM658 225h2v1h-2zM657 226h2v1h-2zM657 227h2v1h-2zM656 228h2v1h-2zM656 229h2v1h-2zM656 230h2v1h-2zM649 279h4v1h-4zM648 280h2v1h-2zM652 280h2v1h-2zM652 281h2v1h-2zM650 282h3v1h-3zM652 283h2v1h-2zM652 284h2v1h-2zM652 285h2v1h-2zM648 286h2v1h-2zM652 286h2v1h-2zM649 287h4v1h-4zM656 279h4v1h-4zM655 280h2v1h-2zM659 280h2v1h-2zM659 281h2v1h-2zM658 282h2v1h-2zM657 283h2v1h-2zM656 284h2v1h-2zM655 285h2v1h-2zM655 286h2v1h-2zM655 287h6v1h-6zM649 336h4v1h-4zM648 337h2v1h-2zM652 337h2v1h-2zM652 338h2v1h-2zM650 339h3v1h-3zM652 340h2v1h-2zM652 341h2v1h-2zM652 342h2v1h-2zM648 343h2v1h-2zM652 343h2v1h-2zM649 344h4v1h-4zM655 336h6v1h-6zM659 337h2v1h-2zM658 338h2v1h-2zM658 339h2v1h-2zM657 340h2v1h-2zM657 341h2v1h-2zM656 342h2v1h-2zM656 343h2v1h-2zM656 344h2v1h-2zM652 392h2v1h-2zM651 393h3v1h-3zM650 394h1v1h-1zM652 394h2v1h-2zM649 395h1v1h-1zM652 395h2v1h-2zM648 396h1v1h-1zM652 396h2v1h-2zM648 397h7v1h-7zM648 398h7v1h-7zM652 399h2v1h-2zM652 400h2v1h-2zM656 392h4v1h-4zM655 393h2v1h-2zM659 393h2v1h-2zM659 394h2v1h-2zM658 395h2v1h-2zM657 396h2v1h-2zM656 397h2v1h-2zM655 398h2v1h-2zM655 399h2v1h-2zM655 400h6v1h-6zM652 449h2v1h-2zM651 450h3v1h-3zM650 451h1v1h-1zM652 451h2v1h-2zM649 452h1v1h-1zM652 452h2v1h-2zM648 453h1v1h-1zM652 453h2v1h-2zM648 454h7v1h-7zM648 455h7v1h-7zM652 456h2v1h-2zM652 457h2v1h-2zM655 449h6v1h-6zM659 450h2v1h-2zM658 451h2v1h-2zM658 452h2v1h-2zM657 453h2v1h-2zM657 454h2v1h-2zM656 455h2v1h-2zM656 456h2v1h-2zM656 457h2v1h-2zM649 506h5v1h-5zM648 507h2v1h-2zM648 508h2v1h-2zM648 509h5v1h-5zM652 510h2v1h-2zM652 511h2v1h-2zM652 512h2v1h-2zM648 513h2v1h-2zM652 513h2v1h-2zM649 514h4v1h-4zM656 506h4v1h-4zM655 507h2v1h-2zM659 507h2v1h-2zM659 508h2v1h-2zM658 509h2v1h-2zM657 510h2v1h-2zM656 511h2v1h-2zM655 512h2v1h-2zM655 513h2v1h-2zM655 514h6v1h-6zM649 563h5v1h-5zM648 564h2v1h-2zM648 565h2v1h-2zM648 566h5v1h-5zM652 567h2v1h-2zM652 568h2v1h-2zM652 569h2v1h-2zM648 570h2v1h-2zM652 570h2v1h-2zM649 571h4v1h-4zM655 563h6v1h-6zM659 564h2v1h-2zM658 565h2v1h-2zM658 566h2v1h-2zM657 567h2v1h-2zM657 568h2v1h-2zM656 569h2v1h-2zM656 570h2v1h-2zM656 571h2v1h-2zM649 620h4v1h-4zM648 621h2v1h-2zM652 621h2v1h-2zM648 622h2v1h-2zM648 623h2v1h-2zM648 624h5v1h-5zM648 625h2v1h-2zM652 625h2v1h-2zM648 626h2v1h-2zM652 626h2v1h-2zM648 627h2v1h-2zM652 627h2v1h-2zM649 628h4v1h-4zM656 620h4v1h-4zM655 621h2v1h-2zM659 621h2v1h-2zM659 622h2v1h-2zM658 623h2v1h-2zM657 624h2v1h-2zM656 625h2v1h-2zM655 626h2v1h-2zM655 627h2v1h-2zM655 628h6v1h-6zM649 677h4v1h-4zM648 678h2v1h-2zM652 678h2v1h-2zM648 679h2v1h-2zM648 680h2v1h-2zM648 681h5v1h-5zM648 682h2v1h-2zM652 682h2v1h-2zM648 683h2v1h-2zM652 683h2v1h-2zM648 684h2v1h-2zM652 684h2v1h-2zM649 685h4v1h-4zM655 677h6v1h-6zM659 678h2v1h-2zM658 679h2v1h-2zM658 680h2v1h-2zM657 681h2v1h-2zM657 682h2v1h-2zM656 683h2v1h-2zM656 684h2v1h-2zM656 685h2v1h-2zM648 733h6v1h-6zM652 734h2v1h-2zM651 735h2v1h-2zM651 736h2v1h-2zM650 737h2v1h-2zM650 738h2v1h-2zM649 739h2v1h-2zM649 740h2v1h-2zM649 741h2v1h-2zM656 733h4v1h-4zM655 734h2v1h-2zM659 734h2v1h-2zM659 735h2v1h-2zM658 736h2v1h-2zM657 737h2v1h-2zM656 738h2v1h-2zM655 739h2v1h-2zM655 740h2v1h-2zM655 741h6v1h-6zM688 777h6v1h-6zM692 778h2v1h-2zM691 779h2v1h-2zM691 780h2v1h-2zM690 781h2v1h-2zM690 782h2v1h-2zM689 783h2v1h-2zM689 784h2v1h-2zM689 785h2v1h-2zM696 784h2v1h-2zM696 785h2v1h-2zM700 777h4v1h-4zM699 778h2v1h-2zM703 778h2v1h-2zM699 779h2v1h-2zM703 779h2v1h-2zM700 780h4v1h-4zM699 781h2v1h-2zM703 781h2v1h-2zM699 782h2v1h-2zM703 782h2v1h-2zM699 783h2v1h-2zM703 783h2v1h-2zM699 784h2v1h-2zM703 784h2v1h-2zM700 785h4v1h-4zM739 777h6v1h-6zM743 778h2v1h-2zM742 779h2v1h-2zM742 780h2v1h-2zM741 781h2v1h-2zM741 782h2v1h-2zM740 783h2v1h-2zM740 784h2v1h-2zM740 785h2v1h-2zM747 784h2v1h-2zM747 785h2v1h-2zM751 777h4v1h-4zM750 778h2v1h-2zM754 778h2v1h-2zM750 779h2v1h-2zM750 780h2v1h-2zM750 781h5v1h-5zM750 782h2v1h-2zM754 782h2v1h-2zM750 783h2v1h-2zM754 783h2v1h-2zM750 784h2v1h-2zM754 784h2v1h-2zM751 785h4v1h-4zM802 51h2v1h-2zM800 52h4v1h-4zM802 53h2v1h-2zM802 54h2v1h-2zM802 55h2v1h-2zM802 56h2v1h-2zM802 57h2v1h-2zM802 58h2v1h-2zM802 59h2v1h-2zM808 51h4v1h-4zM807 52h2v1h-2zM811 52h2v1h-2zM811 53h2v1h-2zM810 54h2v1h-2zM809 55h2v1h-2zM808 56h2v1h-2zM807 57h2v1h-2zM807 58h2v1h-2zM807 59h6v1h-6zM802 108h2v1h-2zM800 109h4v1h-4zM802 110h2v1h-2zM802 111h2v1h-2zM802 112h2v1h-2zM802 113h2v1h-2zM802 114h2v1h-2zM802 115h2v1h-2zM802 116h2v1h-2zM807 108h6v1h-6zM811 109h2v1h-2zM810 110h2v1h-2zM810 111h2v1h-2zM809 112h2v1h-2zM809 113h2v1h-2zM808 114h2v1h-2zM808 115h2v1h-2zM808 116h2v1h-2zM801 165h4v1h-4zM800 166h2v1h-2zM804 166h2v1h-2zM804 167h2v1h-2zM803 168h2v1h-2zM802 169h2v1h-2zM801 170h2v1h-2zM800 171h2v1h-2zM800 172h2v1h-2zM800 173h6v1h-6zM808 165h4v1h-4zM807 166h2v1h-2zM811 166h2v1h-2zM811 167h2v1h-2zM810 168h2v1h-2zM809 169h2v1h-2zM808 170h2v1h-2zM807 171h2v1h-2zM807 172h2v1h-2zM807 173h6v1h-6zM801 222h4v1h-4zM800 223h2v1h-2zM804 223h2v1h-2zM804 224h2v1h-2zM803 225h2v1h-2zM802 226h2v1h-2zM801 227h2v1h-2zM800 228h2v1h-2zM800 229h2v1h-2zM800 230h6v1h-6zM807 222h6v1h-6zM811 223h2v1h-2zM810 224h2v1h-2zM810 225h2v1h-2zM809 226h2v1h-2zM809 227h2v1h-2zM808 228h2v1h-2zM808 229h2v1h-2zM808 230h2v1h-2zM801 279h4v1h-4zM800 280h2v1h-2zM804 280h2v1h-2zM804 281h2v1h-2zM802 282h3v1h-3zM804 283h2v1h-2zM804 284h2v1h-2zM804 285h2v1h-2zM800 286h2v1h-2zM804 286h2v1h-2zM801 287h4v1h-4zM808 279h4v1h-4zM807 280h2v1h-2zM811 280h2v1h-2zM811 281h2v1h-2zM810 282h2v1h-2zM809 283h2v1h-2zM808 284h2v1h-2zM807 285h2v1h-2zM807 286h2v1h-2zM807 287h6v1h-6zM801 336h4v1h-4zM800 337h2v1h-2zM804 337h2v1h-2zM804 338h2v1h-2zM802 339h3v1h-3zM804 340h2v1h-2zM804 341h2v1h-2zM804 342h2v1h-2zM800 343h2v1h-2zM804 343h2v1h-2zM801 344h4v1h-4zM807 336h6v1h-6zM811 337h2v1h-2zM810 338h2v1h-2zM810 339h2v1h-2zM809 340h2v1h-2zM809 341h2v1h-2zM808 342h2v1h-2zM808 343h2v1h-2zM808 344h2v1h-2zM804 392h2v1h-2zM803 393h3v1h-3zM802 394h1v1h-1zM804 394h2v1h-2zM801 395h1v1h-1zM804 395h2v1h-2zM800 396h1v1h-1zM804 396h2v1h-2zM800 397h7v1h-7zM800 398h7v1h-7zM804 399h2v1h-2zM804 400h2v1h-2zM808 392h4v1h-4zM807 393h2v1h-2zM811 393h2v1h-2zM811 394h2v1h-2zM810 395h2v1h-2zM809 396h2v1h-2zM808 397h2v1h-2zM807 398h2v1h-2zM807 399h2v1h-2zM807 400h6v1h-6zM804 449h2v1h-2zM803 450h3v1h-3zM802 451h1v1h-1zM804 451h2v1h-2zM801 452h1v1h-1zM804 452h2v1h-2zM800 453h1v1h-1zM804 453h2v1h-2zM800 454h7v1h-7zM800 455h7v1h-7zM804 456h2v1h-2zM804 457h2v1h-2zM807 449h6v1h-6zM811 450h2v1h-2zM810 451h2v1h-2zM810 452h2v1h-2zM809 453h2v1h-2zM809 454h2v1h-2zM808 455h2v1h-2zM808 456h2v1h-2zM808 457h2v1h-2zM801 506h5v1h-5zM800 507h2v1h-2zM800 508h2v1h-2zM800 509h5v1h-5zM804 510h2v1h-2zM804 511h2v1h-2zM804 512h2v1h-2zM800 513h2v1h-2zM804 513h2v1h-2zM801 514h4v1h-4zM808 506h4v1h-4zM807 507h2v1h-2zM811 507h2v1h-2zM811 508h2v1h-2zM810 509h2v1h-2zM809 510h2v1h-2zM808 511h2v1h-2zM807 512h2v1h-2zM807 513h2v1h-2zM807 514h6v1h-6zM801 563h5v1h-5zM800 564h2v1h-2zM800 565h2v1h-2zM800 566h5v1h-5zM804 567h2v1h-2zM804 568h2v1h-2zM804 569h2v1h-2zM800 570h2v1h-2zM804 570h2v1h-2zM801 571h4v1h-4zM807 563h6v1h-6zM811 564h2v1h-2zM810 565h2v1h-2zM810 566h2v1h-2zM809 567h2v1h-2zM809 568h2v1h-2zM808 569h2v1h-2zM808 570h2v1h-2zM808 571h2v1h-2zM801 620h4v1h-4zM800 621h2v1h-2zM804 621h2v1h-2zM800 622h2v1h-2zM800 623h2v1h-2zM800 624h5v1h-5zM800 625h2v1h-2zM804 625h2v1h-2zM800 626h2v1h-2zM804 626h2v1h-2zM800 627h2v1h-2zM804 627h2v1h-2zM801 628h4v1h-4zM808 620h4v1h-4zM807 621h2v1h-2zM811 621h2v1h-2zM811 622h2v1h-2zM810 623h2v1h-2zM809 624h2v1h-2zM808 625h2v1h-2zM807 626h2v1h-2zM807 627h2v1h-2zM807 628h6v1h-6zM801 677h4v1h-4zM800 678h2v1h-2zM804 678h2v1h-2zM800 679h2v1h-2zM800 680h2v1h-2zM800 681h5v1h-5zM800 682h2v1h-2zM804 682h2v1h-2zM800 683h2v1h-2zM804 683h2v1h-2zM800 684h2v1h-2zM804 684h2v1h-2zM801 685h4v1h-4zM807 677h6v1h-6zM811 678h2v1h-2zM810 679h2v1h-2zM810 680h2v1h-2zM809 681h2v1h-2zM809 682h2v1h-2zM808 683h2v1h-2zM808 684h2v1h-2zM808 685h2v1h-2zM800 733h6v1h-6zM804 734h2v1h-2zM803 735h2v1h-2zM803 736h2v1h-2zM802 737h2v1h-2zM802 738h2v1h-2zM801 739h2v1h-2zM801 740h2v1h-2zM801 741h2v1h-2zM808 733h4v1h-4zM807 734h2v1h-2zM811 734h2v1h-2zM811 735h2v1h-2zM810 736h2v1h-2zM809 737h2v1h-2zM808 738h2v1h-2zM807 739h2v1h-2zM807 740h2v1h-2zM807 741h6v1h-6zM840 777h6v1h-6zM844 778h2v1h-2zM843 779h2v1h-2zM843 780h2v1h-2zM842 781h2v1h-2zM842 782h2v1h-2zM841 783h2v1h-2zM841 784h2v1h-2zM841 785h2v1h-2zM848 784h2v1h-2zM848 785h2v1h-2zM852 777h4v1h-4zM851 778h2v1h-2zM855 778h2v1h-2zM851 779h2v1h-2zM855 779h2v1h-2zM852 780h4v1h-4zM851 781h2v1h-2zM855 781h2v1h-2zM851 782h2v1h-2zM855 782h2v1h-2zM851 783h2v1h-2zM855 783h2v1h-2zM851 784h2v1h-2zM855 784h2v1h-2zM852 785h4v1h-4zM892 777h6v1h-6zM896 778h2v1h-2zM895 779h2v1h-2zM895 780h2v1h-2zM894 781h2v1h-2zM894 782h2v1h-2zM893 783h2v1h-2zM893 784h2v1h-2zM893 785h2v1h-2zM900 784h2v1h-2zM900 785h2v1h-2zM904 777h4v1h-4zM903 778h2v1h-2zM907 778h2v1h-2zM903 779h2v1h-2zM903 780h2v1h-2zM903 781h5v1h-5zM903 782h2v1h-2zM907 782h2v1h-2zM903 783h2v1h-2zM907 783h2v1h-2zM903 784h2v1h-2zM907 784h2v1h-2zM904 785h4v1h-4z"/></g><g shape-rendering="auto"><ellipse cx="561.8" cy="262.4" rx="11" ry="8" fill="#e80a0a"/><ellipse cx="561.8" cy="262.4" rx="2" ry="1.5" fill="none" stroke="#fff" stroke-width="0.8"/><ellipse cx="561.8" cy="360.2" rx="7" ry="7.5" fill="#e80a0a"/><ellipse cx="561.8" cy="360.2" rx="1.5" ry="1.5" fill="none" stroke="#fff" stroke-width="0.8"/><ellipse cx="548.8" cy="424.7" rx="6" ry="5" fill="#e80a0a"/><ellipse cx="548.8" cy="424.7" rx="2.5" ry="1.5" fill="none" stroke="#fff" stroke-width="0.8"/><ellipse cx="549" cy="535.3" rx="7" ry="5.5" fill="#000"/><ellipse cx="549" cy="535.3" rx="3" ry="2.2" fill="none" stroke="#fff" stroke-width="0.8"/><ellipse cx="548.3" cy="568.5" rx="10" ry="7.5" fill="#000"/><ellipse cx="548.3" cy="568.5" rx="2" ry="1.2" fill="none" stroke="#fff" stroke-width="0.8"/><ellipse cx="562.9" cy="608.8" rx="12.5" ry="7.5" fill="#000"/><ellipse cx="562.9" cy="608.8" rx="1.5" ry="1" fill="none" stroke="#fff" stroke-width="0.8"/><ellipse cx="547.3" cy="662.5" rx="9" ry="8" fill="#e80a0a"/><ellipse cx="547.3" cy="662.5" rx="2" ry="1.2" fill="none" stroke="#fff" stroke-width="0.8"/><ellipse cx="562.9" cy="664.2" rx="7" ry="6" fill="#000"/><ellipse cx="562.9" cy="664.2" rx="2.5" ry="2" fill="none" stroke="#fff" stroke-width="0.8"/><ellipse cx="711.5" cy="261" rx="2.8" ry="9" fill="#e80a0a"/><ellipse cx="721.1" cy="134.4" rx="4" ry="2.5" fill="#000"/><ellipse cx="721.1" cy="134.4" rx="2" ry="1" fill="none" stroke="#fff" stroke-width="0.8"/><ellipse cx="711" cy="261.1" rx="12" ry="6" fill="#000"/><ellipse cx="711" cy="261.1" rx="1.5" ry="1" fill="none" stroke="#fff" stroke-width="0.8"/><ellipse cx="722.1" cy="349.4" rx="7" ry="4" fill="#000" transform="rotate(30 722.1 349.4)"/><ellipse cx="722.1" cy="349.4" rx="3" ry="1.5" fill="none" stroke="#fff" stroke-width="0.8" transform="rotate(30 722.1 349.4)"/><ellipse cx="748.5" cy="500.1" rx="2.5" ry="3" fill="#000"/><ellipse cx="726.4" cy="534.9" rx="4.5" ry="4" fill="#000"/><ellipse cx="726.4" cy="534.9" rx="1.5" ry="1.5" fill="none" stroke="#fff" stroke-width="0.8"/><ellipse cx="718.7" cy="561.4" rx="3.5" ry="7" fill="#000" transform="rotate(25 718.7 561.4)"/><ellipse cx="718.7" cy="561.4" rx="1" ry="2" fill="none" stroke="#fff" stroke-width="0.8" transform="rotate(25 718.7 561.4)"/><ellipse cx="712.3" cy="608" rx="6" ry="10.5" fill="#e80a0a"/><ellipse cx="712.3" cy="608.7" rx="13.5" ry="7" fill="#000"/><ellipse cx="712.3" cy="608.7" rx="1.5" ry="1" fill="none" stroke="#fff" stroke-width="0.8"/><ellipse cx="864.8" cy="262.5" rx="8" ry="7" fill="#e80a0a"/><ellipse cx="864.8" cy="262.5" rx="1.5" ry="1.5" fill="none" stroke="#fff" stroke-width="0.8"/><ellipse cx="871" cy="349.1" rx="2" ry="3" fill="#000"/><ellipse cx="864" cy="612.5" rx="13" ry="12.5" fill="#000"/><ellipse cx="864" cy="612.5" rx="2" ry="2" fill="none" stroke="#fff" stroke-width="0.8"/><ellipse cx="863.5" cy="635.4" rx="11.5" ry="10" fill="#e80a0a"/><ellipse cx="863.5" cy="635.4" rx="1.5" ry="1.5" fill="none" stroke="#fff" stroke-width="0.8"/><ellipse cx="862" cy="648.2" rx="3" ry="2" fill="#000"/></g><rect x="510" y="261" width="103" height="1" fill="#000"/><rect x="510" y="609" width="103" height="1" fill="#b0202a"/><rect x="662" y="261" width="103" height="1" fill="#000"/><rect x="662" y="609" width="103" height="1" fill="#b0202a"/><rect x="814" y="261" width="104" height="1" fill="#000"/><rect x="814" y="609" width="104" height="1" fill="#b0202a"/></svg>
<div style="left:482px;top:236px;width:5px;height:559px;background:linear-gradient(90deg,rgba(90,60,30,0.22),rgba(0,0,0,0));"></div>
<div style="left:0;top:231px;width:8px;height:8px;background:#000;"></div>
<div style="left:0;top:250px;width:482px;height:545px;background:#4682b4;"></div>
<div class="tb" style="left:0;top:231px;width:482px;height:21px;border-radius:7px 7px 0 0;border-top:1px solid #fafafa;box-shadow:1px 0 1px rgba(0,0,0,0.25);"></div>
<div class="btn" style="left:7px;top:234px;"></div>
<div class="btn" style="left:28px;top:234px;"></div>
<div class="btn" style="left:49px;top:234px;"></div>
<svg style="position:absolute;left:112px;top:235px" width="14" height="14"><rect x="0.5" y="0.5" width="13" height="13" fill="#f6f6f6" stroke="#a8a8a8"/><path d="M3.2 2.8L10.6 12" stroke="#454545" stroke-width="1.8"/><path d="M10.2 2.8L3.2 12" stroke="#8a8a8a" stroke-width="0.8"/></svg>
<div class="tt" style="left:136px;top:234px;transform:scaleX(1.145)">smartnotebook - v4.3.0 - Jan 28/05</div>
<div style="left:0;top:251px;width:482px;height:1px;background:#f4f8fc;"></div>
<div style="left:0;top:252px;width:482px;height:1px;background:#6f8fb0;"></div>
<div style="left:0;top:253px;width:482px;height:1px;background:#a6c8ec;"></div>
<div style="left:0;top:281px;width:482px;height:1px;background:#1f4f7c;"></div>
<div style="left:0;top:793px;width:482px;height:2px;background:#141a22;"></div>
<div class="m" style="left:10px;top:262px;">File</div>
<div style="left:9px;top:273px;width:10px;height:1px;background:#e6fdff;"></div>
<div class="m" style="left:85px;top:262px;">Options</div>
<div style="left:84px;top:273px;width:10px;height:1px;background:#e6fdff;"></div>
<div class="m" style="left:185px;top:262px;">Chains</div>
<div style="left:184px;top:273px;width:10px;height:1px;background:#e6fdff;"></div>
<div class="m" style="left:277px;top:262px;">Suggest</div>
<div style="left:276px;top:273px;width:10px;height:1px;background:#e6fdff;"></div>
<div class="m" style="left:417px;top:262px;">Help</div>
<div style="left:416px;top:273px;width:10px;height:1px;background:#e6fdff;"></div>
<div class="m" style="left:44px;top:300px;">Reference Id:</div>
<div style="left:163px;top:295px;width:80px;height:23px;background:#4d4d4d;border:1px solid #000;"></div>
<div style="left:164px;top:296px;width:78px;height:21px;border-top:2px solid #333;border-left:2px solid #333;border-bottom:2px solid #c8bfb4;border-right:2px solid #c8bfb4;"></div>
<div class="m" style="left:168px;top:300px;color:#fff;-webkit-text-stroke-color:#4d4d4d;">94</div>
<div style="left:184px;top:299px;width:2px;height:15px;background:#000;"></div>
<div class="tkb" style="left:248px;top:293px;width:99px;height:27px;"></div>
<div class="m" style="left:266px;top:300px;-webkit-text-stroke-color:#708090;">Spectra</div>
<div class="tkb" style="left:349px;top:293px;width:90px;height:27px;"></div>
<div class="m" style="left:367px;top:300px;-webkit-text-stroke-color:#708090;">Search</div>
<div class="m" style="left:43px;top:335px;">Fit   Connect  Pattern Stat</div>
<div class="m" style="left:341px;top:335px;">Current Chain</div>
<div style="left:5px;top:353px;width:285px;height:130px;background:#4d4d4d;border-top:2px solid #1f2a36;border-left:2px solid #1f2a36;border-bottom:2px solid #b8b8b8;border-right:2px solid #b8b8b8;"></div>
<div style="left:323px;top:353px;width:132px;height:130px;background:#4d4d4d;border-top:2px solid #1f2a36;border-left:2px solid #1f2a36;border-bottom:2px solid #b8b8b8;border-right:2px solid #b8b8b8;"></div>
<div class="m" style="left:9px;top:357px;color:#fff;-webkit-text-stroke-color:#4d4d4d;">-> 2 0.70   6-116 dxx  1/1  CC</div>
<div class="m" style="left:326px;top:357px;color:#fff;-webkit-text-stroke-color:#4d4d4d;">   Start</div>
<div class="m" style="left:326px;top:375px;color:#fff;-webkit-text-stroke-color:#4d4d4d;">   1: 94-26</div>
<div class="m" style="left:326px;top:393px;color:#fff;-webkit-text-stroke-color:#4d4d4d;">   2: 26-6</div>
<div class="m" style="left:326px;top:411px;color:#fff;-webkit-text-stroke-color:#4d4d4d;">-> 3: 6-116</div>
<div class="m" style="left:326px;top:429px;color:#fff;-webkit-text-stroke-color:#4d4d4d;">   End</div>
<div style="left:292px;top:353px;width:19px;height:130px;background:#4682b4;border-top:2px solid #1d3a5a;border-left:2px solid #1d3a5a;border-bottom:2px solid #b4ccff;border-right:2px solid #b4ccff;"></div>
<div style="left:294px;top:355px;width:15px;height:15px;background:#c9d6ea;"></div>
<svg style="position:absolute;left:294px;top:355px" width="15" height="15"><polygon points="7.5,1 14,14 1,14" fill="#4682b4"/><path d="M7.5 1L14 14L1 14" fill="none" stroke="#1d3a5a" stroke-width="1.6"/><path d="M1 14L7.5 1" stroke="#c8dcff" stroke-width="1"/></svg>
<div style="left:294px;top:370px;width:15px;height:96px;background:#4682b4;border-top:2px solid #b4ccff;border-left:2px solid #b4ccff;border-bottom:2px solid #1d3a5a;border-right:2px solid #1d3a5a;"></div>
<div style="left:294px;top:466px;width:15px;height:15px;background:#c9d6ea;"></div>
<svg style="position:absolute;left:294px;top:466px" width="15" height="15"><polygon points="1,1 14,1 7.5,14" fill="#4682b4"/><path d="M14 1L7.5 14" stroke="#1d3a5a" stroke-width="1.6"/><path d="M1 1L14 1" stroke="#1d3a5a" stroke-width="0"/></svg>
<div style="left:457px;top:353px;width:19px;height:130px;background:#4682b4;border-top:2px solid #1d3a5a;border-left:2px solid #1d3a5a;border-bottom:2px solid #b4ccff;border-right:2px solid #b4ccff;"></div>
<div style="left:459px;top:355px;width:15px;height:15px;background:#c9d6ea;"></div>
<svg style="position:absolute;left:459px;top:355px" width="15" height="15"><polygon points="7.5,1 14,14 1,14" fill="#4682b4"/><path d="M7.5 1L14 14L1 14" fill="none" stroke="#1d3a5a" stroke-width="1.6"/><path d="M1 14L7.5 1" stroke="#c8dcff" stroke-width="1"/></svg>
<div style="left:459px;top:370px;width:15px;height:96px;background:#4682b4;border-top:2px solid #b4ccff;border-left:2px solid #b4ccff;border-bottom:2px solid #1d3a5a;border-right:2px solid #1d3a5a;"></div>
<div style="left:459px;top:466px;width:15px;height:15px;background:#c9d6ea;"></div>
<svg style="position:absolute;left:459px;top:466px" width="15" height="15"><polygon points="1,1 14,1 7.5,14" fill="#4682b4"/><path d="M14 1L7.5 14" stroke="#1d3a5a" stroke-width="1.6"/><path d="M1 1L14 1" stroke="#1d3a5a" stroke-width="0"/></svg>
<div class="tkb" style="left:23px;top:491px;width:216px;height:26px;"></div>
<div class="m" style="left:77px;top:498px;-webkit-text-stroke-color:#708090;">Add to Chain</div>
<div class="tkb" style="left:241px;top:491px;width:216px;height:26px;"></div>
<div class="m" style="left:272px;top:498px;color:#a3aeb9;-webkit-text-stroke-color:#708090;">Delete from Chain</div>
<div class="tkb" style="left:23px;top:519px;width:216px;height:27px;"></div>
<div class="m" style="left:64px;top:527px;-webkit-text-stroke-color:#708090;">Display Spectra</div>
<div class="tkb" style="left:241px;top:519px;width:216px;height:27px;"></div>
<div class="m" style="left:313px;top:527px;-webkit-text-stroke-color:#708090;">Best Fit</div>
<div class="m" style="left:14px;top:558px;">Sequence</div>
<div class="m" style="left:36px;top:582px;">1</div>
<div class="cell" style="left:50px;top:575px;">M</div>
<div class="cell" style="left:71px;top:575px;">S</div>
<div class="cell" style="left:92px;top:575px;">T</div>
<div class="cell" style="left:113px;top:575px;">D</div>
<div class="cell" style="left:134px;top:575px;">D</div>
<div class="cell" style="left:155px;top:575px;">S</div>
<div class="cell" style="left:176px;top:575px;">P</div>
<div class="cell" style="left:197px;top:575px;">Y</div>
<div class="cell" style="left:218px;top:575px;">K</div>
<div class="cell" style="left:239px;top:575px;">Q</div>
<div class="cell" style="left:260px;top:575px;">A</div>
<div class="cell" style="left:281px;top:575px;">F</div>
<div class="cell" style="left:302px;top:575px;">S</div>
<div class="cell" style="left:323px;top:575px;">L</div>
<div class="cell" style="left:344px;top:575px;">F</div>
<div class="cell" style="left:365px;top:575px;">D</div>
<div class="cell" style="left:386px;top:575px;">R</div>
<div class="cell" style="left:407px;top:575px;">H</div>
<div class="cell" style="left:428px;top:575px;background:#000;border-color:#8a8a8a #4a4a4a #4a4a4a #8a8a8a;-webkit-text-stroke-color:#000;">G</div>
<div class="cell" style="left:449px;top:575px;background:#000;border-color:#8a8a8a #4a4a4a #4a4a4a #8a8a8a;-webkit-text-stroke-color:#000;">T</div>
<div class="m" style="left:27px;top:609px;">21</div>
<div class="cell" style="left:50px;top:602px;background:#000;border-color:#8a8a8a #4a4a4a #4a4a4a #8a8a8a;-webkit-text-stroke-color:#000;">G</div>
<div class="cell" style="left:71px;top:602px;">R</div>
<div class="cell" style="left:92px;top:602px;">I</div>
<div class="cell" style="left:113px;top:602px;">P</div>
<div class="cell" style="left:134px;top:602px;">K</div>
<div class="cell" style="left:155px;top:602px;">T</div>
<div class="cell" style="left:176px;top:602px;">S</div>
<div class="cell" style="left:197px;top:602px;">I</div>
<div class="cell" style="left:218px;top:602px;">G</div>
<div class="cell" style="left:239px;top:602px;">D</div>
<div class="cell" style="left:260px;top:602px;">L</div>
<div class="cell" style="left:281px;top:602px;">L</div>
<div class="cell" style="left:302px;top:602px;">R</div>
<div class="cell" style="left:323px;top:602px;">A</div>
<div class="cell" style="left:344px;top:602px;">C</div>
<div class="cell" style="left:365px;top:602px;">G</div>
<div class="cell" style="left:386px;top:602px;">Q</div>
<div class="cell" style="left:407px;top:602px;">N</div>
<div class="cell" style="left:428px;top:602px;">P</div>
<div class="cell" style="left:449px;top:602px;">T</div>
<div class="m" style="left:27px;top:636px;">41</div>
<div class="cell" style="left:50px;top:629px;">L</div>
<div class="cell" style="left:71px;top:629px;">A</div>
<div class="cell" style="left:92px;top:629px;">E</div>
<div class="cell" style="left:113px;top:629px;">I</div>
<div class="cell" style="left:134px;top:629px;">T</div>
<div class="cell" style="left:155px;top:629px;background:#0000e6;border-color:#8c8cff #00007a #00007a #8c8cff;-webkit-text-stroke-color:#0000e6;">E</div>
<div class="cell" style="left:176px;top:629px;background:#9632e6;border-color:#d890ff #5a1090 #5a1090 #d890ff;-webkit-text-stroke-color:#9632e6;">I</div>
<div class="cell" style="left:197px;top:629px;background:#9632e6;border-color:#d890ff #5a1090 #5a1090 #d890ff;-webkit-text-stroke-color:#9632e6;">E</div>
<div class="cell" style="left:218px;top:629px;background:#9632e6;border-color:#d890ff #5a1090 #5a1090 #d890ff;-webkit-text-stroke-color:#9632e6;">S</div>
<div class="cell" style="left:239px;top:629px;">T</div>
<div class="cell" style="left:260px;top:629px;">L</div>
<div class="cell" style="left:281px;top:629px;">P</div>
<div class="cell" style="left:302px;top:629px;">A</div>
<div class="cell" style="left:323px;top:629px;">E</div>
<div class="cell" style="left:344px;top:629px;">V</div>
<div class="cell" style="left:365px;top:629px;">D</div>
<div class="cell" style="left:386px;top:629px;">M</div>
<div class="cell" style="left:407px;top:629px;">E</div>
<div class="cell" style="left:428px;top:629px;">Q</div>
<div class="cell" style="left:449px;top:629px;">F</div>
<div class="m" style="left:27px;top:663px;">61</div>
<div class="cell" style="left:50px;top:656px;">L</div>
<div class="cell" style="left:71px;top:656px;">Q</div>
<div class="cell" style="left:92px;top:656px;">V</div>
<div class="cell" style="left:113px;top:656px;">L</div>
<div class="cell" style="left:134px;top:656px;">N</div>
<div class="cell" style="left:155px;top:656px;">R</div>
<div class="cell" style="left:176px;top:656px;">P</div>
<div class="cell" style="left:197px;top:656px;">N</div>
<div class="cell" style="left:218px;top:656px;">G</div>
<div class="cell" style="left:239px;top:656px;">F</div>
<div class="cell" style="left:260px;top:656px;">D</div>
<div class="cell" style="left:281px;top:656px;">M</div>
<div class="cell" style="left:302px;top:656px;">P</div>
<div class="cell" style="left:323px;top:656px;">G</div>
<div class="cell" style="left:344px;top:656px;">D</div>
<div class="cell" style="left:365px;top:656px;">P</div>
<div class="cell" style="left:386px;top:656px;">E</div>
<div class="cell" style="left:407px;top:656px;">E</div>
<div class="cell" style="left:428px;top:656px;">F</div>
<div class="cell" style="left:449px;top:656px;">V</div>
<div class="m" style="left:27px;top:690px;">81</div>
<div class="cell" style="left:50px;top:683px;">K</div>
<div class="cell" style="left:71px;top:683px;">G</div>
<div class="cell" style="left:92px;top:683px;">F</div>
<div class="cell" style="left:113px;top:683px;">Q</div>
<div class="cell" style="left:134px;top:683px;">V</div>
<div class="cell" style="left:155px;top:683px;">F</div>
<div class="cell" style="left:176px;top:683px;">D</div>
<div class="cell" style="left:197px;top:683px;">K</div>
<div class="cell" style="left:218px;top:683px;">D</div>
<div class="cell" style="left:239px;top:683px;">A</div>
<div class="cell" style="left:260px;top:683px;">T</div>
<div class="cell" style="left:281px;top:683px;">G</div>
<div class="cell" style="left:302px;top:683px;">M</div>
<div class="cell" style="left:323px;top:683px;">I</div>
<div class="cell" style="left:344px;top:683px;">G</div>
<div class="cell" style="left:365px;top:683px;">V</div>
<div class="cell" style="left:386px;top:683px;">G</div>
<div class="cell" style="left:407px;top:683px;">E</div>
<div class="cell" style="left:428px;top:683px;">L</div>
<div class="cell" style="left:449px;top:683px;">R</div>
<div class="m" style="left:18px;top:717px;">101</div>
<div class="cell" style="left:50px;top:710px;">Y</div>
<div class="cell" style="left:71px;top:710px;">V</div>
<div class="cell" style="left:92px;top:710px;">L</div>
<div class="cell" style="left:113px;top:710px;">T</div>
<div class="cell" style="left:134px;top:710px;">S</div>
<div class="cell" style="left:155px;top:710px;">L</div>
<div class="cell" style="left:176px;top:710px;">G</div>
<div class="cell" style="left:197px;top:710px;">E</div>
<div class="cell" style="left:218px;top:710px;">K</div>
<div class="cell" style="left:239px;top:710px;">L</div>
<div class="cell" style="left:260px;top:710px;">S</div>
<div class="cell" style="left:281px;top:710px;">N</div>
<div class="cell" style="left:302px;top:710px;">E</div>
<div class="cell" style="left:323px;top:710px;">E</div>
<div class="cell" style="left:344px;top:710px;">M</div>
<div class="cell" style="left:365px;top:710px;">D</div>
<div class="cell" style="left:386px;top:710px;">E</div>
<div class="cell" style="left:407px;top:710px;">L</div>
<div class="cell" style="left:428px;top:710px;">L</div>
<div class="cell" style="left:449px;top:710px;">K</div>
<div class="m" style="left:18px;top:744px;">121</div>
<div class="cell" style="left:50px;top:737px;">G</div>
<div class="cell" style="left:71px;top:737px;">V</div>
<div class="cell" style="left:92px;top:737px;">P</div>
<div class="cell" style="left:113px;top:737px;">V</div>
<div class="cell" style="left:134px;top:737px;">K</div>
<div class="cell" style="left:155px;top:737px;">D</div>
<div class="cell" style="left:176px;top:737px;">G</div>
<div class="cell" style="left:197px;top:737px;">M</div>
<div class="cell" style="left:218px;top:737px;">V</div>
<div class="cell" style="left:239px;top:737px;">N</div>
<div class="cell" style="left:260px;top:737px;">Y</div>
<div class="cell" style="left:281px;top:737px;">H</div>
<div class="cell" style="left:302px;top:737px;">D</div>
<div class="cell" style="left:323px;top:737px;">F</div>
<div class="cell" style="left:344px;top:737px;">V</div>
<div class="cell" style="left:365px;top:737px;">Q</div>
<div class="cell" style="left:386px;top:737px;">M</div>
<div class="cell" style="left:407px;top:737px;">I</div>
<div class="cell" style="left:428px;top:737px;">L</div>
<div class="cell" style="left:449px;top:737px;">A</div>
<div class="m" style="left:18px;top:771px;">141</div>
<div class="cell" style="left:50px;top:764px;">N</div>
<div style="left:467px;top:778px;width:15px;height:15px;background:#fafafa;"></div>
<svg style="position:absolute;left:467px;top:778px" width="15" height="15"><path d="M4 14L14 4M8 14L14 8M12 14L14 12" stroke="#777" stroke-width="1.2"/></svg>
</body></html>
